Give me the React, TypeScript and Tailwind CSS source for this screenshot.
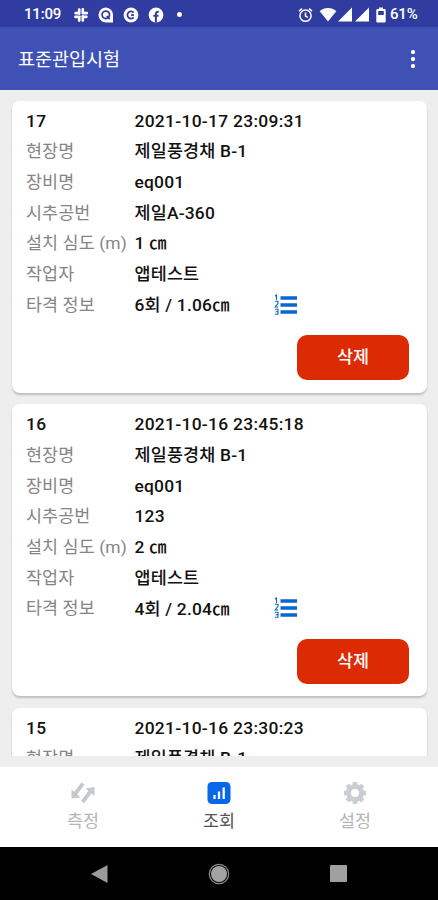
import { useState } from 'react';

const records = [
  { no: '17', date: '2021-10-17 23:09:31', site: '제일풍경채 B-1', equipment: 'eq001', hole: '제일A-360', depth: '1 ㎝', worker: '앱테스트', blow: '6회 / 1.06㎝' },
  { no: '16', date: '2021-10-16 23:45:18', site: '제일풍경채 B-1', equipment: 'eq001', hole: '123', depth: '2 ㎝', worker: '앱테스트', blow: '4회 / 2.04㎝' },
  // only the top of this card is visible above the tab bar
  { no: '15', date: '2021-10-16 23:30:23', site: '제일풍경채 B-1' },
];

type RecordItem = {
  no: string,
  date: string,
  site: string,
  equipment?: string,
  hole?: string,
  depth?: string,
  worker?: string,
  blow?: string,
};

function StatusBar() {
  return (
    <div className="h-[27px] shrink-0 bg-[#303c9f] flex items-center justify-between pl-[24px] pr-[20px] pt-[2px] text-white">
      <div className="flex items-center">
        <span className="w-[49px] text-[15px] leading-none font-medium tracking-[-0.2px]">11:09</span>
        <svg width="16" height="16" viewBox="0 0 16 16" fill="none" stroke="white" strokeWidth="2.7" strokeLinecap="round">
          <path d="M6.2 2.6v4M9.8 5.4v-3M9.8 9.4v4M6.2 10.6v3M2.4 9.8h4.2M2.6 6.2h3.2M9.8 6.2h4M10.4 9.8h3" />
        </svg>
        <svg className="ml-[9px]" width="16" height="16" viewBox="0 0 16 16">
          <path fill="white" d="M8 .5a7.5 7.5 0 1 0 0 15h7V8A7.3 7.3 0 0 0 8 .5z" />
          <circle cx="7.8" cy="7.8" r="3.7" fill="none" stroke="#303c9f" strokeWidth="1.8" />
          <path d="M8.8 9.2l3 3" stroke="#303c9f" strokeWidth="1.8" />
        </svg>
        <svg className="ml-[9px]" width="16" height="16" viewBox="0 0 16 16">
          <circle cx="8" cy="8" r="7.4" fill="white" />
          <path d="M10.7 5.6a3.6 3.6 0 1 0 0 4.8M8.2 8h2.6" fill="none" stroke="#303c9f" strokeWidth="1.8" />
        </svg>
        <svg className="ml-[9px]" width="16" height="16" viewBox="0 0 16 16">
          <circle cx="8" cy="8" r="7.4" fill="white" />
          <path d="M7.9 15.5V7.3c0-1.8.8-2.8 2.9-2.6M5.3 8.7h5.2" fill="none" stroke="#303c9f" strokeWidth="2" />
        </svg>
        <span className="ml-[13px] w-[5px] h-[5px] rounded-full bg-white" />
      </div>
      <div className="flex items-center">
        <svg width="15" height="16" viewBox="0 0 15 16" fill="none" stroke="white" strokeWidth="1.5">
          <circle cx="7.5" cy="8.7" r="5.6" />
          <path d="M7.5 5.5v3.6l2.4 1.3M1 4.2l3-2.5M14 4.2l-3-2.5" />
        </svg>
        <svg className="ml-[6px]" width="18" height="15" viewBox="0 0 18 15" fill="white">
          <path d="M9 14.5L.7 4.2C3 2 6 1 9 1s6 1 8.3 3.2z" />
        </svg>
        <svg className="ml-[1px]" width="14" height="15" viewBox="0 0 14 15" fill="white">
          <path d="M0 14.5L14 .5v14z" />
        </svg>
        <svg className="ml-[3px]" width="14" height="15" viewBox="0 0 14 15" fill="white">
          <path d="M0 14.5L14 .5v14z" />
        </svg>
        <svg className="ml-[7px]" width="10" height="16" viewBox="0 0 10 16">
          <path fill="white" d="M3 .5h4V2h1.5Q9.7 2 9.7 3.2v11Q9.7 15.5 8.5 15.5h-7Q.3 15.5.3 14.2v-11Q.3 2 1.5 2H3z" />
          <path fill="#303c9f" d="M2.2 4h5.6v4H2.2z" />
        </svg>
        <span className="ml-[4px] w-[28px] text-[15px] leading-none font-medium tracking-[-0.2px]">61%</span>
      </div>
    </div>
  );
}

function ListIcon() {
  return (
    <svg className="-mt-[1px]" width="24" height="22" viewBox="0 0 24 22" fill="none" stroke="#0c66cc">
      <path strokeWidth="3.6" d="M6.5 4H23M6.5 11H23M6.5 18H23" />
      <path strokeWidth="1.1" d="M1 2l1.5-1v5M1 7.3h3v2L1.2 13h3M1 15.3h3v5H1M1.5 17.8h2.5" />
    </svg>
  );
}

function Row({ label, value }: { label: string, value: string }) {
  return (
    <div className="h-[30.7px] flex items-center">
      <span className="w-[108.5px] shrink-0 whitespace-nowrap tracking-[0.1px] text-[#858585]">{label}</span>
      <span className="font-medium tracking-[0.2px] text-[#111]">{value}</span>
    </div>
  );
}

function RecordCard({ item }: { item: RecordItem }) {
  return (
    <div className="h-[292px] shrink-0 rounded-[8px] bg-white shadow-[0_2px_2px_rgba(0,0,0,0.2)] pl-[14px] pr-[18px] pt-[5.5px] text-[17.4px] leading-none">
      <div className="h-[30.7px] flex items-center font-medium text-[#111]">
        <span className="w-[108.5px] tracking-[0.3px]">{item.no}</span>
        <span className="tracking-[0.3px]">{item.date}</span>
      </div>
      <Row label="현장명" value={item.site} />
      {item.equipment && <Row label="장비명" value={item.equipment} />}
      {item.hole && <Row label="시추공번" value={item.hole} />}
      {item.depth && <Row label="설치 심도 (m)" value={item.depth} />}
      {item.worker && <Row label="작업자" value={item.worker} />}
      {item.blow && (
        <>
          <div className="h-[30.7px] flex items-center">
            <span className="w-[108.5px] shrink-0 tracking-[0.1px] text-[#858585]">타격 정보</span>
            <span className="w-[139px] pt-[1px] font-medium tracking-[0.2px] text-[#111]">{item.blow}</span>
            <ListIcon />
          </div>
          <div className="mt-[14.5px] flex justify-end">
            <button className="w-[112px] h-[45px] rounded-[10px] bg-[#dc2b02] text-white font-medium">삭제</button>
          </div>
        </>
      )}
    </div>
  );
}

function MeasureIcon() {
  return (
    <svg width="24" height="24" viewBox="0 0 24 24" fill="none" stroke="#c5c9cc" strokeWidth="3.8">
      <path d="M12 2.5L4 13M11.5 21L19.5 10.5" />
      <path fill="#c5c9cc" stroke="none" d="M.5 8.5v9l9-1zM14.5 7.500l9-1.500v9z" />
    </svg>
  );
}

function ChartIcon() {
  return (
    <svg width="24" height="24" viewBox="0 0 24 24">
      <rect x="0.5" y="1" width="23" height="22" rx="4.5" fill="#0868e8" />
      <path d="M7.5 18v-4M12 18v-7.5M16.7 18V6.5" stroke="white" strokeWidth="2.3" />
    </svg>
  );
}

function GearIcon() {
  return (
    <svg width="24" height="24" viewBox="0 0 24 24" fill="none" stroke="#c9ced2">
      <circle cx="12" cy="12" r="6.5" strokeWidth="5" />
      <path strokeWidth="4.6" d="M12 1v3M12 20v3M1 12h3M20 12h3M4.2 4.2l2 2M17.8 17.8l2 2M4.2 19.8l2-2M17.8 6.2l2-2" />
    </svg>
  );
}

const tabs = [
  { id: 'measure', label: '측정', icon: <MeasureIcon /> },
  { id: 'search', label: '조회', icon: <ChartIcon /> },
  { id: 'settings', label: '설정', icon: <GearIcon /> },
];

export default function App() {
  const [tab, setTab] = useState('search');

  return (
    <div className="w-[438px] h-[900px] flex flex-col overflow-hidden bg-[#eeeeee] font-[Roboto,'Noto_Sans_CJK_KR',sans-serif]">
      <StatusBar />
      <header className="h-[62.5px] shrink-0 bg-[#3f51b5] flex items-center justify-between pl-[18px] pr-[23px] pt-[3px] text-white">
        <h1 className="text-[18.5px] leading-none">표준관입시험</h1>
        <div className="-mt-[2px] flex flex-col gap-[2.5px]">
          <span className="w-[4.5px] h-[4.5px] rounded-[1.5px] bg-white" />
          <span className="w-[4.5px] h-[4.5px] rounded-[1.5px] bg-white" />
          <span className="w-[4.5px] h-[4.5px] rounded-[1.5px] bg-white" />
        </div>
      </header>

      <main className="h-[666px] shrink-0 overflow-hidden flex flex-col gap-[11.5px] pl-[12px] pr-[11px] pt-[11px]">
        {records.map((item) => <RecordCard key={item.no} item={item} />)}
      </main>

      <nav className="mt-auto h-[80.5px] shrink-0 bg-white flex pl-[15px] pr-[15px]">
        {tabs.map(({ id, label, icon }) => (
          <button key={id} onClick={() => setTab(id)} className="flex-1 flex flex-col items-center pt-[14px]">
            {icon}
            <span className={tab === id ? 'mt-[8px] text-[17.4px] leading-none text-[#555]' : 'mt-[8px] text-[17.4px] leading-none text-[#b5b5b5]'}>{label}</span>
          </button>
        ))}
      </nav>

      {/* Android navigation buttons */}
      <div className="h-[53px] shrink-0 bg-black flex items-center justify-between pl-[91px] pr-[91px]">
        <svg width="17" height="18" viewBox="0 0 17 18" fill="#9a9a9a"><path d="M0 9L16.5 0v18z" /></svg>
        <svg width="22" height="22" viewBox="0 0 22 22">
          <circle cx="11" cy="11" r="8" fill="#a3a3a3" />
          <circle cx="11" cy="11" r="9.7" fill="none" stroke="#8a8a8a" strokeWidth="1.3" />
        </svg>
        <span className="w-[17px] h-[17px] rounded-[1px] bg-[#a0a0a0]" />
      </div>
    </div>
  );
}
